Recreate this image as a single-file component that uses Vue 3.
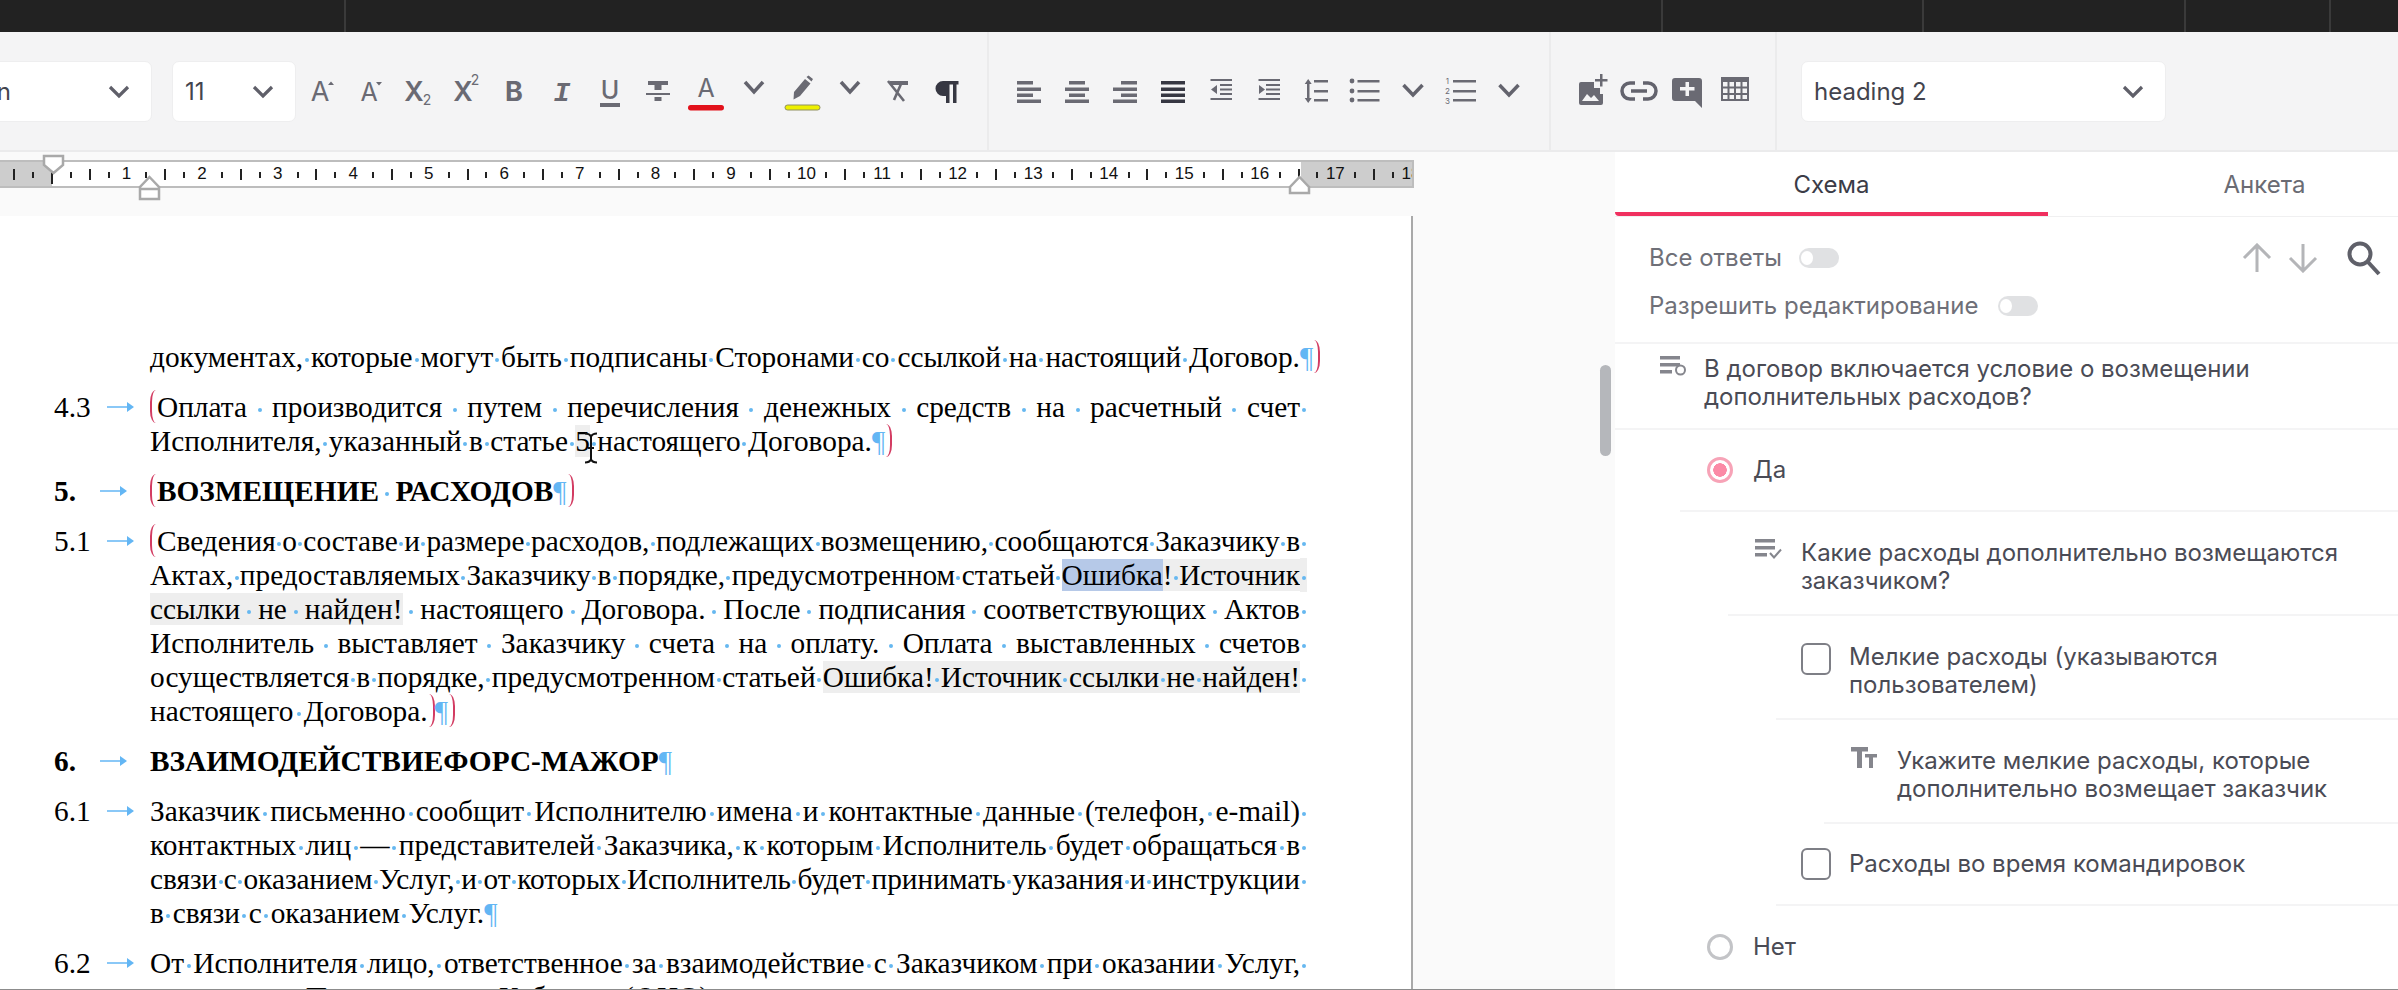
<script setup>
const marginLeft = 51
const cm = 75.55

const ticks = []
for (let i = -3; i <= 73; i++) {
  const whole = i % 4 === 0
  ticks.push({
    left: marginLeft + (i / 4) * cm,
    kind: whole ? 'zero' : Math.abs(i % 4) === 2 ? 'big' : 'small',
    label: whole && i > 0 ? i / 4 : ''
  })
}

const seg = (text, cls = '') => ({ cls, toks: text.split(/( )/).filter(Boolean) })

const l = (parts, opts = {}) => ({
  parts: parts.map(p => (typeof p === 'string' ? seg(p) : seg(p[1], p[0]))),
  ...opts
})

const paragraphs = [
  {
    lines: [
      l(['документах, которые могут быть подписаны Сторонами со ссылкой на настоящий Договор.'], { pil: true, close: true, hang: true })
    ]
  },
  {
    num: '4.3',
    lines: [
      l(['Оплата производится путем перечисления денежных средств на расчетный счет'], { open: true, tail: true }),
      l(['Исполнителя, указанный в статье ', ['grey', '5'], ' настоящего Договора.'], { end: true, pil: true, close: true })
    ]
  },
  {
    num: '5.',
    bold: true,
    lines: [l(['ВОЗМЕЩЕНИЕ РАСХОДОВ'], { open: true, end: true, pil: true, close: true, ws: 9 })]
  },
  {
    num: '5.1',
    lines: [
      l(['Сведения о составе и размере расходов, подлежащих возмещению, сообщаются Заказчику в'], { open: true, tail: true }),
      l(['Актах, предоставляемых Заказчику в порядке, предусмотренном статьей ', ['sel', 'Ошибка'], ['grey', '! Источник']], { tail: true, tailGrey: true }),
      l([['grey', 'ссылки не найден!'], ' настоящего Договора. После подписания соответствующих Актов'], { tail: true }),
      l(['Исполнитель выставляет Заказчику счета на оплату. Оплата выставленных счетов'], { tail: true }),
      l(['осуществляется в порядке, предусмотренном статьей ', ['grey', 'Ошибка! Источник ссылки не найден!']], { tail: true }),
      l(['настоящего Договора.'], { end: true, close: true, pil: true, closeBefore: true, ws: 3 })
    ]
  },
  {
    num: '6.',
    bold: true,
    lines: [l(['ВЗАИМОДЕЙСТВИЕФОРС-МАЖОР'], { end: true, pil: true })]
  },
  {
    num: '6.1',
    lines: [
      l(['Заказчик письменно сообщит Исполнителю имена и контактные данные (телефон, e-mail)'], { tail: true }),
      l(['контактных лиц — представителей Заказчика, к которым Исполнитель будет обращаться в'], { tail: true }),
      l(['связи с оказанием Услуг, и от которых Исполнитель будет принимать указания и инструкции'], { tail: true }),
      l(['в связи с оказанием Услуг.'], { end: true, pil: true, ws: 1.5 })
    ]
  },
  {
    num: '6.2',
    lines: [
      l(['От Исполнителя лицо, ответственное за взаимодействие с Заказчиком при оказании Услуг,'], { tail: true }),
      l(['назначается Представитель Кабинета (ФИО)'], { end: true })
    ]
  }
]
</script>

<template>
  <div class="app">
    <div class="topbar">
      <div class="top-cell" style="width: 346px"></div>
      <div class="top-cell" style="width: 1317px"></div>
      <div class="top-cell" style="width: 261px"></div>
      <div class="top-cell" style="width: 262px"></div>
      <div class="top-cell" style="width: 145px"></div>
    </div>

    <div class="toolbar">
      <div class="select font-select">
        <span>Times New Roman</span>
        <svg class="sel-chev" width="24" height="24" viewBox="0 0 24 24"><path d="M3 7l9 9 9-9" /></svg>
      </div>
      <div class="select size-select">
        <span>11</span>
        <svg class="sel-chev" width="24" height="24" viewBox="0 0 24 24"><path d="M3 7l9 9 9-9" /></svg>
      </div>

      <div class="icons first-icons">
        <svg class="ic" viewBox="0 0 48 48"><text x="22" y="34" font-size="27" font-weight="400" text-anchor="middle">A</text><path d="M33 14.500l3 3.500h-6z" /></svg>
        <svg class="ic" viewBox="0 0 48 48"><text x="23" y="34" font-size="25" font-weight="400" text-anchor="middle">A</text><path d="M30 15h6l-3 3.500z" /></svg>
        <svg class="ic" viewBox="0 0 48 48"><text x="20" y="34" font-size="27" font-weight="600" text-anchor="middle">X</text><text x="33" y="38" font-size="14" text-anchor="middle">2</text></svg>
        <svg class="ic" viewBox="0 0 48 48"><text x="21" y="34" font-size="27" font-weight="600" text-anchor="middle">X</text><text x="33" y="18" font-size="14" text-anchor="middle">2</text></svg>
        <svg class="ic" viewBox="0 0 48 48"><text x="24" y="34" font-size="27" font-weight="700" text-anchor="middle">B</text></svg>
        <svg class="ic" viewBox="0 0 48 48"><text class="mono" x="24" y="34" font-size="28" font-weight="700" text-anchor="middle">I</text></svg>
        <svg class="ic" viewBox="0 0 48 48"><text x="24" y="32" font-size="25" font-weight="500" text-anchor="middle">U</text><rect x="14" y="36" width="20" height="4" /></svg>
        <svg class="ic" viewBox="0 0 48 48"><path d="M14 14h20v4h-6.500v5h-7v-5H14zM12 26h24v2H12zM20.500 30h7v4h-7z" /></svg>
        <svg class="ic" viewBox="0 0 48 48"><text x="24" y="30" font-size="25" font-weight="400" text-anchor="middle">A</text><rect class="red" x="6" y="38" width="36" height="5.500" rx="2.700" /></svg>
        <svg class="ic" viewBox="0 0 48 48"><path class="stroke" d="M15 15l9 10 9-10" /></svg>
        <svg class="ic" viewBox="0 0 48 48"><path d="M27 12l5.500 4.500L22 29l-6.500 3.500L16 25zM28.500 10l2-1.500 4.500 3.500-1.500 2.500z" /><rect class="yellow" x="7" y="38" width="35" height="5" rx="2.500" /></svg>
        <svg class="ic" viewBox="0 0 48 48"><path class="stroke" d="M15 15l9 10 9-10" /></svg>
        <svg class="ic" viewBox="0 0 48 48"><path d="M16 14h18v4H16z" /><path class="thin" d="M27 17l-7 16M14 14l16 20" /></svg>
        <svg class="ic dark" viewBox="0 0 48 48"><path d="M36.500 14H21a7.500 7.500 0 0 0 0 15h3v7h3.500V17.500h3.500V36h3.500V17.500h2z" /></svg>
      </div>

      <div class="icons group">
        <svg class="ic" viewBox="0 0 48 48"><path d="M12 14h16v3.500H12zM12 20.500h24V24H12zM12 26.500h16V30H12zM12 32.500h24V36H12z" /></svg>
        <svg class="ic" viewBox="0 0 48 48"><path d="M16 14h16v3.500H16zM12 20.500h24V24H12zM16 26.500h16V30H16zM12 32.500h24V36H12z" /></svg>
        <svg class="ic" viewBox="0 0 48 48"><path d="M20 14h16v3.500H20zM12 20.500h24V24H12zM20 26.500h16V30H20zM12 32.500h24V36H12z" /></svg>
        <svg class="ic active" viewBox="0 0 48 48"><path d="M12 14h24v3.500H12zM12 20.500h24V24H12zM12 26.500h24V30H12zM12 32.500h24V36H12z" /></svg>
        <svg class="ic" viewBox="0 0 48 48"><path d="M13.500 12H35v2H13.500zM23 17h12v2H23zM23 21.500h12v2H23zM23 26h12v2H23zM13.500 31H35v2H13.500zM14 22.500l6-4.500v9z" /></svg>
        <svg class="ic" viewBox="0 0 48 48"><path d="M13.500 12H35v2H13.500zM21 17h14v2H21zM21 21.500h14v2H21zM21 26h14v2H21zM13.500 31H35v2H13.500zM20 22.500l-6-4.500v9z" /></svg>
        <svg class="ic" viewBox="0 0 48 48"><path d="M21 13h14v2.500H21zM21 23h14v2.500H21zM21 32h14v2.500H21zM14 17h2.500v14H14zM15.200 12l3.500 5h-7zM15.200 36l3.500-5h-7z" /></svg>
        <svg class="ic" viewBox="0 0 48 48"><circle cx="11" cy="14" r="2.400" /><circle cx="11" cy="24" r="2.400" /><circle cx="11" cy="33" r="2.400" /><path d="M16.500 13h22v2.500h-22zM16.500 23h22v2.500h-22zM16.500 32h22v2.500h-22z" /></svg>
        <svg class="ic" viewBox="0 0 48 48"><path class="stroke" d="M14.500 18l9.500 10 9.500-10" /></svg>
        <svg class="ic" viewBox="0 0 48 48"><text x="10.500" y="17" font-size="8" text-anchor="middle">1</text><text x="10.500" y="27" font-size="8" text-anchor="middle">2</text><text x="10.500" y="37" font-size="8" text-anchor="middle">3</text><path d="M16 13h23v2.500H16zM16 23h23v2.500H16zM16 32h23v2.500H16z" /></svg>
        <svg class="ic" viewBox="0 0 48 48"><path class="stroke" d="M14.500 18l9.500 10 9.500-10" /></svg>
      </div>

      <div class="icons group">
        <svg class="ic" viewBox="0 0 48 48"><path d="M12 17a2 2 0 0 1 2-2h13v6h6v6h3v9a2 2 0 0 1-2 2H14a2 2 0 0 1-2-2z" /><path class="cut" d="M15 34l5-7 4 4 3-3 5 6z" /><path d="M33 7h2.500v5h5v2.500h-5v5H33v-5h-5V12h5z" /></svg>
        <svg class="ic" viewBox="0 0 48 48"><path class="stroke" d="M20 16h-5a8 8 0 0 0 0 16h5M28 16h5a8 8 0 0 1 0 16h-5M16 24h16" /></svg>
        <svg class="ic" viewBox="0 0 48 48"><path d="M9 14a3 3 0 0 1 3-3h24a3 3 0 0 1 3 3v27l-7-7H12a3 3 0 0 1-3-3z" /><path class="cut" d="M22.500 15h3.500v5h5.500v3.500H26v5.500h-3.500v-5.500H17V20h5.500z" /></svg>
        <svg class="ic" viewBox="0 0 48 48"><path d="M10 10h28v5H10z" /><path class="grid" d="M11 14h26v19H11zM11 20.500h26M11 27h26M17.500 14v19M24 14v19M30.500 14v19" /></svg>
      </div>

      <div class="group style-group">
        <div class="select style-select">
          <span>heading 2</span>
          <svg class="sel-chev" width="24" height="24" viewBox="0 0 24 24"><path d="M3 7l9 9 9-9" /></svg>
        </div>
      </div>
    </div>

    <div class="main">
      <div class="editor">
        <div class="ruler-strip">
          <div class="ruler">
            <div class="ruler-off off-left"></div>
            <div class="ruler-off off-right"></div>
            <template v-for="(t, i) in ticks" :key="i">
              <span v-if="t.label" class="ruler-num" :style="{ left: t.left + 'px' }">{{ t.label }}</span>
              <span v-else class="tick" :class="t.kind" :style="{ left: t.left + 'px' }"></span>
            </template>
          </div>
          <svg class="handle h-first" width="23" height="21" viewBox="0 0 23 21"><path d="M2 2h19v9l-9.500 8L2 11z" /></svg>
          <svg class="handle h-left" width="23" height="26" viewBox="0 0 23 26"><path d="M11.500 2L21 12v12H2V12zM2 14h19" /></svg>
          <svg class="handle h-right" width="23" height="20" viewBox="0 0 23 20"><path d="M11.500 2L21 12v6H2v-6z" /></svg>
        </div>

        <div class="page">
          <div v-for="(p, pi) in paragraphs" :key="pi" class="para" :class="{ bold: p.bold }">
            <div class="marker">
              <template v-if="p.num">
                <span class="num">{{ p.num }}</span>
                <svg class="arrow" width="27" height="12" viewBox="0 0 27 12"><path d="M0 6h22" /><path class="head" d="M20 1l7 5-7 5z" /></svg>
              </template>
            </div>
            <div class="lines">
              <div v-for="(line, li) in p.lines" :key="li" class="ln" :class="{ end: line.end }" :style="line.ws ? { wordSpacing: line.ws + 'px' } : null">
                <span v-if="line.open" class="brk brk-open"></span>
                <span v-for="(s, si) in line.parts" :key="si" :class="s.cls">
                  <template v-for="(tok, ti) in s.toks" :key="ti">
                    <span v-if="tok === ' '" class="sp">{{ tok }}</span>
                    <template v-else>{{ tok }}</template>
                  </template>
                </span>
                <span v-if="line.closeBefore" class="brk brk-close"></span>
                <span :class="{ hang: line.hang }">
                  <span v-if="line.pil" class="pil">¶</span>
                  <span v-if="line.close" class="brk brk-close"></span>
                </span>
                <span v-if="line.tail" class="tail" :class="{ 'tail-grey': line.tailGrey }"></span>
              </div>
            </div>
          </div>
          <svg class="cursor" width="16" height="32" viewBox="0 0 16 32"><path d="M2 1.500c3 0 5 1 6 3 1-2 3-3 6-3M8 4.500v23M2 30.500c3 0 5-1 6-3 1 2 3 3 6 3M5 16h6" /></svg>
        </div>
        <div class="scroll-thumb"></div>
      </div>

      <div class="panel">
        <div class="tabs">
          <div class="tab active">Схема</div>
          <div class="tab">Анкета</div>
        </div>

        <div class="options">
          <div class="opt-row">
            <span class="opt-label">Все ответы</span>
            <span class="toggle"></span>
            <div class="opt-tools">
              <svg width="30" height="30" viewBox="0 0 30 30"><path class="nav" d="M15 29V2M2 15L15 2l13 13" /></svg>
              <svg width="30" height="30" viewBox="0 0 30 30"><path class="nav" d="M15 1v27M2 15l13 13 13-13" /></svg>
              <svg class="search" width="36" height="36" viewBox="0 0 36 36"><circle cx="14" cy="14" r="10.500" /><path d="M22 22l11 12" /></svg>
            </div>
          </div>
          <div class="opt-row">
            <span class="opt-label">Разрешить редактирование</span>
            <span class="toggle"></span>
          </div>
        </div>

        <div class="row r-top">
          <svg class="row-icon" width="26" height="20" viewBox="0 0 26 20"><path d="M0 0h20v3.500H0zM0 7h20v3.500H0zM0 14h12v3.500H0z" /><circle class="ring" cx="20.500" cy="14" r="4.500" /></svg>
          <div class="row-text">В договор включается условие о возмещении<br />дополнительных расходов?</div>
        </div>

        <div class="row r-choice lvl1">
          <span class="radio on"></span>
          <div class="row-text">Да</div>
        </div>

        <div class="row r-q lvl2">
          <svg class="row-icon" width="27" height="20" viewBox="0 0 27 20"><path d="M0 0h20v3.500H0zM0 7h20v3.500H0zM0 14h12v3.500H0z" /><path class="ring" d="M15 14l4 4.500 7-8" /></svg>
          <div class="row-text">Какие расходы дополнительно возмещаются<br />заказчиком?</div>
        </div>

        <div class="row r-q lvl3">
          <span class="check"></span>
          <div class="row-text">Мелкие расходы (указываются<br />пользователем)</div>
        </div>

        <div class="row r-q lvl4">
          <svg class="row-icon tt" width="26" height="21" viewBox="0 0 26 21"><path d="M0 0h17v4.500h-6V21H6V4.500H0zM14 7h12v3.500h-4V21h-4V10.500h-4z" /></svg>
          <div class="row-text">Укажите мелкие расходы, которые<br />дополнительно возмещает заказчик</div>
        </div>

        <div class="row r-choice lvl3">
          <span class="check"></span>
          <div class="row-text">Расходы во время командировок</div>
        </div>

        <div class="row r-choice lvl1 no-line">
          <span class="radio"></span>
          <div class="row-text">Нет</div>
        </div>
      </div>
    </div>
  </div>
</template>

<style>
html,
body {
  margin: 0;
  background: #fff;
}
</style>

<style scoped>
.app {
  width: 2398px;
  height: 990px;
  display: flex;
  flex-direction: column;
  overflow: hidden;
  font-family: Inter, "Noto Sans", sans-serif;
  color: #43444e;
}

.topbar {
  height: 32px;
  flex: none;
  display: flex;
  background: #222;
}

.top-cell {
  border-right: 2px solid #3a3a3a;
  box-sizing: border-box;
}

.toolbar {
  height: 118px;
  flex: none;
  display: flex;
  align-items: center;
  background: #f4f4f5;
  border-bottom: 2px solid #ebebec;
}

.select {
  height: 61px;
  flex: none;
  box-sizing: border-box;
  display: flex;
  align-items: center;
  background: #fff;
  border: 1px solid #eeeeef;
  border-radius: 7px;
  font-size: 24px;
  position: relative;
}

.font-select {
  width: 372px;
  margin-left: -220px;
  padding-left: 18px;
}

.size-select {
  width: 124px;
  margin-left: 20px;
  padding-left: 12px;
}

.style-select {
  width: 365px;
  margin-left: -1px;
  padding-left: 12px;
}

.sel-chev {
  position: absolute;
  right: 20px;
  top: 18px;
}

.sel-chev path {
  fill: none;
  stroke: #5f5f69;
  stroke-width: 3.2;
}

.icons {
  display: flex;
  align-items: center;
  flex: none;
}

.first-icons {
  margin-left: 2px;
  margin-right: 17px;
}

.group {
  align-self: stretch;
  display: flex;
  align-items: center;
  border-left: 2px solid #ebebec;
  padding: 0 16px;
}

.style-group {
  padding-left: 25px;
}

.ic {
  width: 48px;
  height: 48px;
  flex: none;
  fill: #6a6a73;
  font-family: Inter, sans-serif;
}

.ic.dark,
.ic.active {
  fill: #363742;
}

.ic .mono {
  font-family: "Liberation Mono", monospace;
  font-style: italic;
}

.ic .stroke {
  fill: none;
  stroke: #63636d;
  stroke-width: 3.5;
}

.ic .thin {
  fill: none;
  stroke: #6a6a73;
  stroke-width: 2.6;
}

.ic .red {
  fill: #e2111b;
}

.ic .yellow {
  fill: #eef000;
  stroke: #8f8f60;
  stroke-width: 1;
}

.ic .cut {
  fill: #f4f4f5;
}

.ic .grid {
  fill: none;
  stroke: #6a6a73;
  stroke-width: 2;
}

.main {
  flex: 1;
  min-height: 0;
  display: flex;
  border-bottom: 1px solid #8c8c8c;
}

.editor {
  width: 1615px;
  flex: none;
  display: flex;
  flex-direction: column;
  position: relative;
  background: #fafafa;
}

.ruler-strip {
  height: 64px;
  flex: none;
  box-sizing: border-box;
  padding-top: 8px;
  position: relative;
}

.ruler {
  width: 1414px;
  height: 28px;
  box-sizing: border-box;
  border: 2px solid #bdbdbd;
  border-left: 0;
  background: #fff;
  position: relative;
  overflow: hidden;
}

.ruler-off {
  position: absolute;
  top: 0;
  bottom: 0;
  background: #cdcdcd;
}

.off-left {
  left: 0;
  width: 52px;
}

.off-right {
  left: 1301px;
  right: 0;
}

.ruler-num {
  position: absolute;
  top: 2px;
  transform: translateX(-50%);
  font: 17px/20px "Liberation Sans", sans-serif;
  color: #111;
}

.tick {
  position: absolute;
  width: 2px;
  background: #222;
}

.tick.small {
  top: 10px;
  height: 6px;
}

.tick.big {
  top: 7px;
  height: 11px;
}

.tick.zero {
  top: 8px;
  height: 14px;
}

.handle {
  position: absolute;
  fill: #fff;
  stroke: #a9a9a9;
  stroke-width: 2.500;
}

.h-first {
  left: 42px;
  top: 2px;
}

.h-left {
  left: 138px;
  top: 23px;
}

.h-right {
  left: 1288px;
  top: 23px;
}

.page {
  flex: 1;
  min-height: 0;
  width: 1413px;
  box-sizing: border-box;
  padding: 124px 0 0 54px;
  background: #fff;
  border-right: 2px solid #a9a9a9;
  position: relative;
  overflow: hidden;
  font: 29.33px/34px "Liberation Serif", "Times New Roman", serif;
  color: #000;
}

.para {
  display: flex;
  margin-bottom: 16px;
}

.bold {
  font-weight: 700;
}

.marker {
  width: 96px;
  height: 34px;
  flex: none;
  display: flex;
  align-items: center;
}

.num {
  width: 53px;
  flex: none;
}

.bold .num {
  width: 46px;
}

.arrow path {
  fill: none;
  stroke: #63b6f4;
  stroke-width: 1.500;
}

.arrow .head {
  fill: #63b6f4;
  stroke: none;
}

.lines {
  width: 1150px;
  flex: none;
}

.ln {
  height: 34px;
  white-space: nowrap;
  text-align: justify;
  text-align-last: justify;
  word-spacing: -3.4px;
}

.ln.end {
  text-align: left;
  text-align-last: left;
  word-spacing: 0;
}

.sp {
  position: relative;
}

.sp::after,
.tail::after {
  content: "";
  position: absolute;
  top: 17px;
  left: 50%;
  width: 4px;
  height: 4px;
  margin-left: -2px;
  border-radius: 50%;
  background: #66b8f0;
}

.tail {
  position: relative;
  display: inline-block;
  width: 0;
  height: 34px;
  vertical-align: top;
}

.tail::after {
  left: 4px;
  top: 18px;
}

.tail-grey::before {
  content: "";
  position: absolute;
  left: 0;
  top: 0;
  width: 7px;
  height: 34px;
  background: #eee;
}

.grey {
  background: #eee;
}

.sel {
  background: #b6c9e8;
}

.pil {
  color: #63b6f4;
  font-weight: 400;
}

.hang {
  display: inline-block;
  width: 0;
  white-space: nowrap;
}

.brk {
  display: inline-block;
  width: 6px;
  height: 33px;
  box-sizing: border-box;
  vertical-align: top;
}

.brk-open {
  margin-right: 1px;
  border-left: 2px solid #d33c62;
  border-radius: 6px 0 0 6px / 12px 0 0 12px;
}

.brk-close {
  margin-left: 1px;
  border-right: 2px solid #d33c62;
  border-radius: 0 6px 6px 0 / 0 12px 12px 0;
}

.cursor {
  position: absolute;
  left: 583px;
  top: 216px;
  fill: none;
  stroke: #111;
  stroke-width: 2;
}

.scroll-thumb {
  position: absolute;
  left: 1600px;
  top: 213px;
  width: 11px;
  height: 91px;
  border-radius: 6px;
  background: #b5b7bb;
}

.panel {
  flex: 1;
  min-width: 0;
  background: #fff;
  overflow: hidden;
  font-size: 24px;
  line-height: 28px;
}

.tabs {
  display: flex;
  height: 65px;
  box-sizing: border-box;
  border-bottom: 1px solid #f0f0f1;
}

.tab {
  width: 433px;
  height: 64px;
  flex: none;
  box-sizing: border-box;
  padding-top: 2px;
  display: flex;
  align-items: center;
  justify-content: center;
  color: #6a6b73;
}

.tab.active {
  padding-top: 6px;
  color: #3b3c47;
  border-bottom: 4px solid #f0305f;
  border-radius: 0 0 0 4px;
}

.options {
  height: 127px;
  box-sizing: border-box;
  padding-top: 17px;
  border-bottom: 2px solid #f4f4f5;
}

.opt-row {
  height: 48px;
  display: flex;
  align-items: center;
  padding-left: 34px;
  color: #6f7078;
}

.opt-label {
  margin-right: 17px;
}

.opt-row + .opt-row .opt-label {
  margin-right: 20px;
}

.toggle {
  width: 40px;
  height: 20px;
  border-radius: 10px;
  background: #e0e1e3;
  position: relative;
}

.toggle::after {
  content: "";
  position: absolute;
  left: 2px;
  top: 3px;
  width: 12px;
  height: 14px;
  border-radius: 50%;
  background: #fff;
}

.opt-tools {
  margin-left: auto;
  padding-right: 16px;
  display: flex;
  align-items: center;
  gap: 16px;
}

.opt-tools .search {
  margin-left: 12px;
}

.nav {
  fill: none;
  stroke: #b4b5b8;
  stroke-width: 3;
}

.search {
  fill: none;
  stroke: #5f6069;
  stroke-width: 4;
}

.row {
  display: flex;
  align-items: flex-start;
  border-bottom: 2px solid #f4f4f5;
  box-sizing: border-box;
  color: #4a4b55;
}

.r-top {
  height: 86px;
  padding: 11px 0 0 45px;
  gap: 18px;
}

.r-top .row-icon {
  margin-top: 1px;
}

.r-choice {
  height: 82px;
  align-items: center;
}

.r-q {
  height: 104px;
  padding-top: 27px;
}

.lvl1 {
  margin-left: 65px;
  padding-left: 27px;
  gap: 20px;
}

.lvl2 {
  margin-left: 113px;
  padding-left: 27px;
  gap: 19px;
}

.lvl3 {
  margin-left: 161px;
  padding-left: 25px;
  gap: 18px;
}

.lvl4 {
  margin-left: 209px;
  padding-left: 27px;
  gap: 20px;
}

.no-line {
  border-bottom: 0;
}

.row-icon {
  flex: none;
  fill: #85868d;
}

.row-icon .ring {
  fill: #fff;
  stroke: #85868d;
  stroke-width: 2;
}

.lvl2 .row-icon .ring {
  fill: none;
}

.radio {
  width: 26px;
  height: 26px;
  flex: none;
  box-sizing: border-box;
  border-radius: 50%;
  border: 3px solid #c3c4c7;
}

.radio.on {
  border: 3px solid #f7a3b7;
  background: radial-gradient(circle, #fb8aa6 0 6.500px, #fff 7px);
}

.check {
  width: 30px;
  height: 32px;
  flex: none;
  box-sizing: border-box;
  border: 2px solid #7e7f86;
  border-radius: 6px;
}
</style>
